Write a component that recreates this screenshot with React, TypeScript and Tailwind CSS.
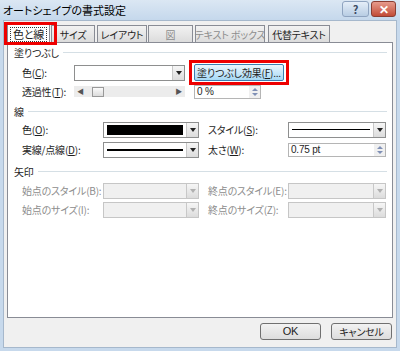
import { ReactNode } from 'react';

const font = "font-['Noto_Sans_CJK_JP',sans-serif] [font-feature-settings:'palt']";

function Arrow({ disabled }: { disabled?: boolean }) {
  return (
    <div className="flex h-full w-[12px] items-center justify-center border-l border-[#c8c8c8] bg-gradient-to-b from-[#f6f6f6] to-[#dcdcdc]">
      <div className={`h-0 w-0 border-x-[3px] border-t-[4px] border-x-transparent ${disabled ? 'border-t-[#b0b0b0]' : 'border-t-[#222]'}`} />
    </div>
  );
}

function Combo({ w, children, disabled }: { w: string; children?: ReactNode; disabled?: boolean }) {
  return (
    <div className={`flex h-[16px] shrink-0 ${w} border ${disabled ? 'border-[#c6c6c6] bg-[#f0f0f0]' : 'border-[#8e8f8f] bg-white'}`}>
      <div className="flex flex-1 items-center px-[3px]">{children}</div>
      <Arrow disabled={disabled} />
    </div>
  );
}

function Spin({ w, value }: { w: string; value: string }) {
  return (
    <div className={`flex h-[14px] shrink-0 ${w} border border-[#b5b5b5] bg-white`}>
      <div className="flex flex-1 items-center px-[2px] text-[10px] leading-none font-['Liberation_Sans',sans-serif]">{value}</div>
      <div className="flex w-[11px] flex-col items-center justify-center gap-[2px] bg-[#f0f0f0]">
        <div className="h-0 w-0 border-x-[3px] border-b-[3px] border-x-transparent border-b-[#7f8fb5]" />
        <div className="h-0 w-0 border-x-[3px] border-t-[3px] border-x-transparent border-t-[#7f8fb5]" />
      </div>
    </div>
  );
}

function Group({ title }: { title: string }) {
  return (
    <div className="flex h-[16px] items-center gap-[4px] pl-[6px] pr-[5px]">
      <span>{title}</span>
      <div className="h-px flex-1 bg-[#d5dfe5]" />
    </div>
  );
}

function U({ c }: { c: string }) {
  return <span className="underline underline-offset-1">{c}</span>;
}

export default function App() {
  const tabs = [
    { label: '色と線', cls: 'w-[43px]', active: true },
    { label: 'サイズ', cls: 'ml-[1px] w-[44px]' },
    { label: 'レイアウト', cls: 'ml-[2px] w-[50px]' },
    { label: '図', cls: 'ml-[1px] w-[45px]', disabled: true },
    { label: 'テキスト ボックス', cls: 'ml-[2px] w-[70px]', disabled: true },
    { label: '代替テキスト', cls: 'ml-[3px] w-[62px]' },
  ];

  return (
    <div className={`flex h-[351px] w-[400px] flex-col overflow-hidden whitespace-nowrap bg-[#c7d9ec] text-[10px] tracking-[-0.2px] text-[#1e1e1e] ${font}`}>
      {/* title bar */}
      <div className="flex h-[20px] shrink-0 items-start bg-gradient-to-b from-[#dbe7f3] to-[#c5d8ec]">
        <div className="pl-[3px] pt-[2px] text-[11px] leading-[16px] tracking-normal text-black">オートシェイプの書式設定</div>
        <div className="ml-auto mr-[4px] mt-[1px] flex gap-[2px]">
          <div className="flex h-[16px] w-[27px] items-center justify-center rounded-[3px] border border-[#8fa4c0] bg-gradient-to-b from-[#e5eef8] to-[#b8cde3] text-[11px] font-bold leading-none text-[#3b4a63]">?</div>
          <div className="flex h-[16px] w-[25px] items-center justify-center rounded-[3px] border border-[#8a3d32] bg-gradient-to-b from-[#e69a8c] to-[#c14a36] text-[12px] font-bold leading-none text-white">✕</div>
        </div>
      </div>

      {/* body */}
      <div className="mx-[3px] mb-[3px] flex flex-1 flex-col border border-[#a6b8cc] bg-[#f0f0f0] px-[3px]">
        {/* tabs */}
        <div className="flex h-[21px] items-end pt-[2px]">
          {tabs.map((t) =>
            t.active ? (
              <div key={t.label} className={`relative z-10 -mb-px flex h-[19px] ${t.cls} items-center justify-center border border-b-0 border-[#898c95] bg-white`}>
                <span className="border border-dotted border-[#333] px-[2px] text-[11px] leading-[13px]">{t.label}</span>
                <div className="absolute -left-[4px] -top-[3px] h-[23px] w-[53px] border-[3px] border-[#ee0000]" />
              </div>
            ) : (
              <div
                key={t.label}
                className={`flex h-[17px] ${t.cls} items-center justify-center border border-b-0 border-[#898c95] bg-gradient-to-b from-[#f2f2f2] to-[#dcdcdc] ${t.disabled ? 'text-[#8d8d8d]' : ''}`}
              >
                {t.label}
              </div>
            )
          )}
        </div>

        {/* panel */}
        <div className="flex h-[276px] flex-col border border-[#898c95] bg-white pt-[1px]">
          <Group title="塗りつぶし" />
          <div className="mt-[4px] flex h-[17px] items-center pl-[14px]">
            <span className="w-[52px]">色(<U c="C" />):</span>
            <Combo w="w-[111px]" />
            <div className="relative ml-[9px]">
              <div className="flex h-[17px] w-[90px] items-center justify-center rounded-[2px] border border-[#3c7fb1] bg-gradient-to-b from-[#eaf6fd] to-[#a7d9f5]">
                塗りつぶし効果(<U c="F" />)...
              </div>
              <div className="absolute -left-[5px] -top-[4px] h-[25px] w-[100px] border-[3px] border-[#ee0000]" />
            </div>
          </div>
          <div className="mt-[3px] flex h-[15px] items-center pl-[14px]">
            <span className="w-[52px]">透過性(<U c="T" />):</span>
            <div className="flex h-[11px] w-[111px] items-center bg-[#ececec] px-[3px]">
              <span className="text-[7px] leading-none text-[#555]">◀</span>
              <div className="ml-[8px] h-[10px] w-[12px] border border-[#999] bg-gradient-to-b from-[#fbfbfb] to-[#dcdcdc]" />
              <span className="ml-auto text-[7px] leading-none text-[#555]">▶</span>
            </div>
            <div className="ml-[9px]">
              <Spin w="w-[67px]" value="0 %" />
            </div>
          </div>

          <div className="mt-[4px]">
            <Group title="線" />
          </div>
          <div className="mt-[2px] flex h-[17px] items-center pl-[14px]">
            <span className="w-[81px]">色(<U c="O" />):</span>
            <Combo w="w-[96px]">
              <div className="h-[10px] w-full bg-black" />
            </Combo>
            <span className="ml-[9px] w-[80px]">スタイル(<U c="S" />):</span>
            <Combo w="w-[98px]">
              <div className="h-px w-full bg-black" />
            </Combo>
          </div>
          <div className="mt-[3px] flex h-[17px] items-center pl-[14px]">
            <span className="w-[81px]">実線/点線(<U c="D" />):</span>
            <Combo w="w-[96px]">
              <div className="h-[2px] w-full bg-black" />
            </Combo>
            <span className="ml-[9px] w-[80px]">太さ(<U c="W" />):</span>
            <Spin w="w-[98px]" value="0.75 pt" />
          </div>

          <div className="mt-[5px]">
            <Group title="矢印" />
          </div>
          <div className="mt-[3px] flex h-[17px] items-center pl-[14px] text-[#8d8d8d]">
            <span className="w-[81px]">始点のスタイル(B):</span>
            <Combo w="w-[96px]" disabled />
            <span className="ml-[9px] w-[80px]">終点のスタイル(E):</span>
            <Combo w="w-[98px]" disabled />
          </div>
          <div className="mt-[2px] flex h-[17px] items-center pl-[14px] text-[#8d8d8d]">
            <span className="w-[81px]">始点のサイズ(I):</span>
            <Combo w="w-[96px]" disabled />
            <span className="ml-[9px] w-[80px]">終点のサイズ(Z):</span>
            <Combo w="w-[98px]" disabled />
          </div>
        </div>

        {/* footer */}
        <div className="flex flex-1 items-center justify-end gap-[10px] pb-[2px] pr-[1px]">
          <button className="h-[17px] w-[61px] rounded-[3px] border border-[#707070] bg-gradient-to-b from-[#f2f2f2] to-[#dddddd] text-[11px] leading-none font-['Liberation_Sans',sans-serif]">OK</button>
          <button className="h-[17px] w-[61px] rounded-[3px] border border-[#707070] bg-gradient-to-b from-[#f2f2f2] to-[#dddddd] leading-none">キャンセル</button>
        </div>
      </div>
    </div>
  );
}
